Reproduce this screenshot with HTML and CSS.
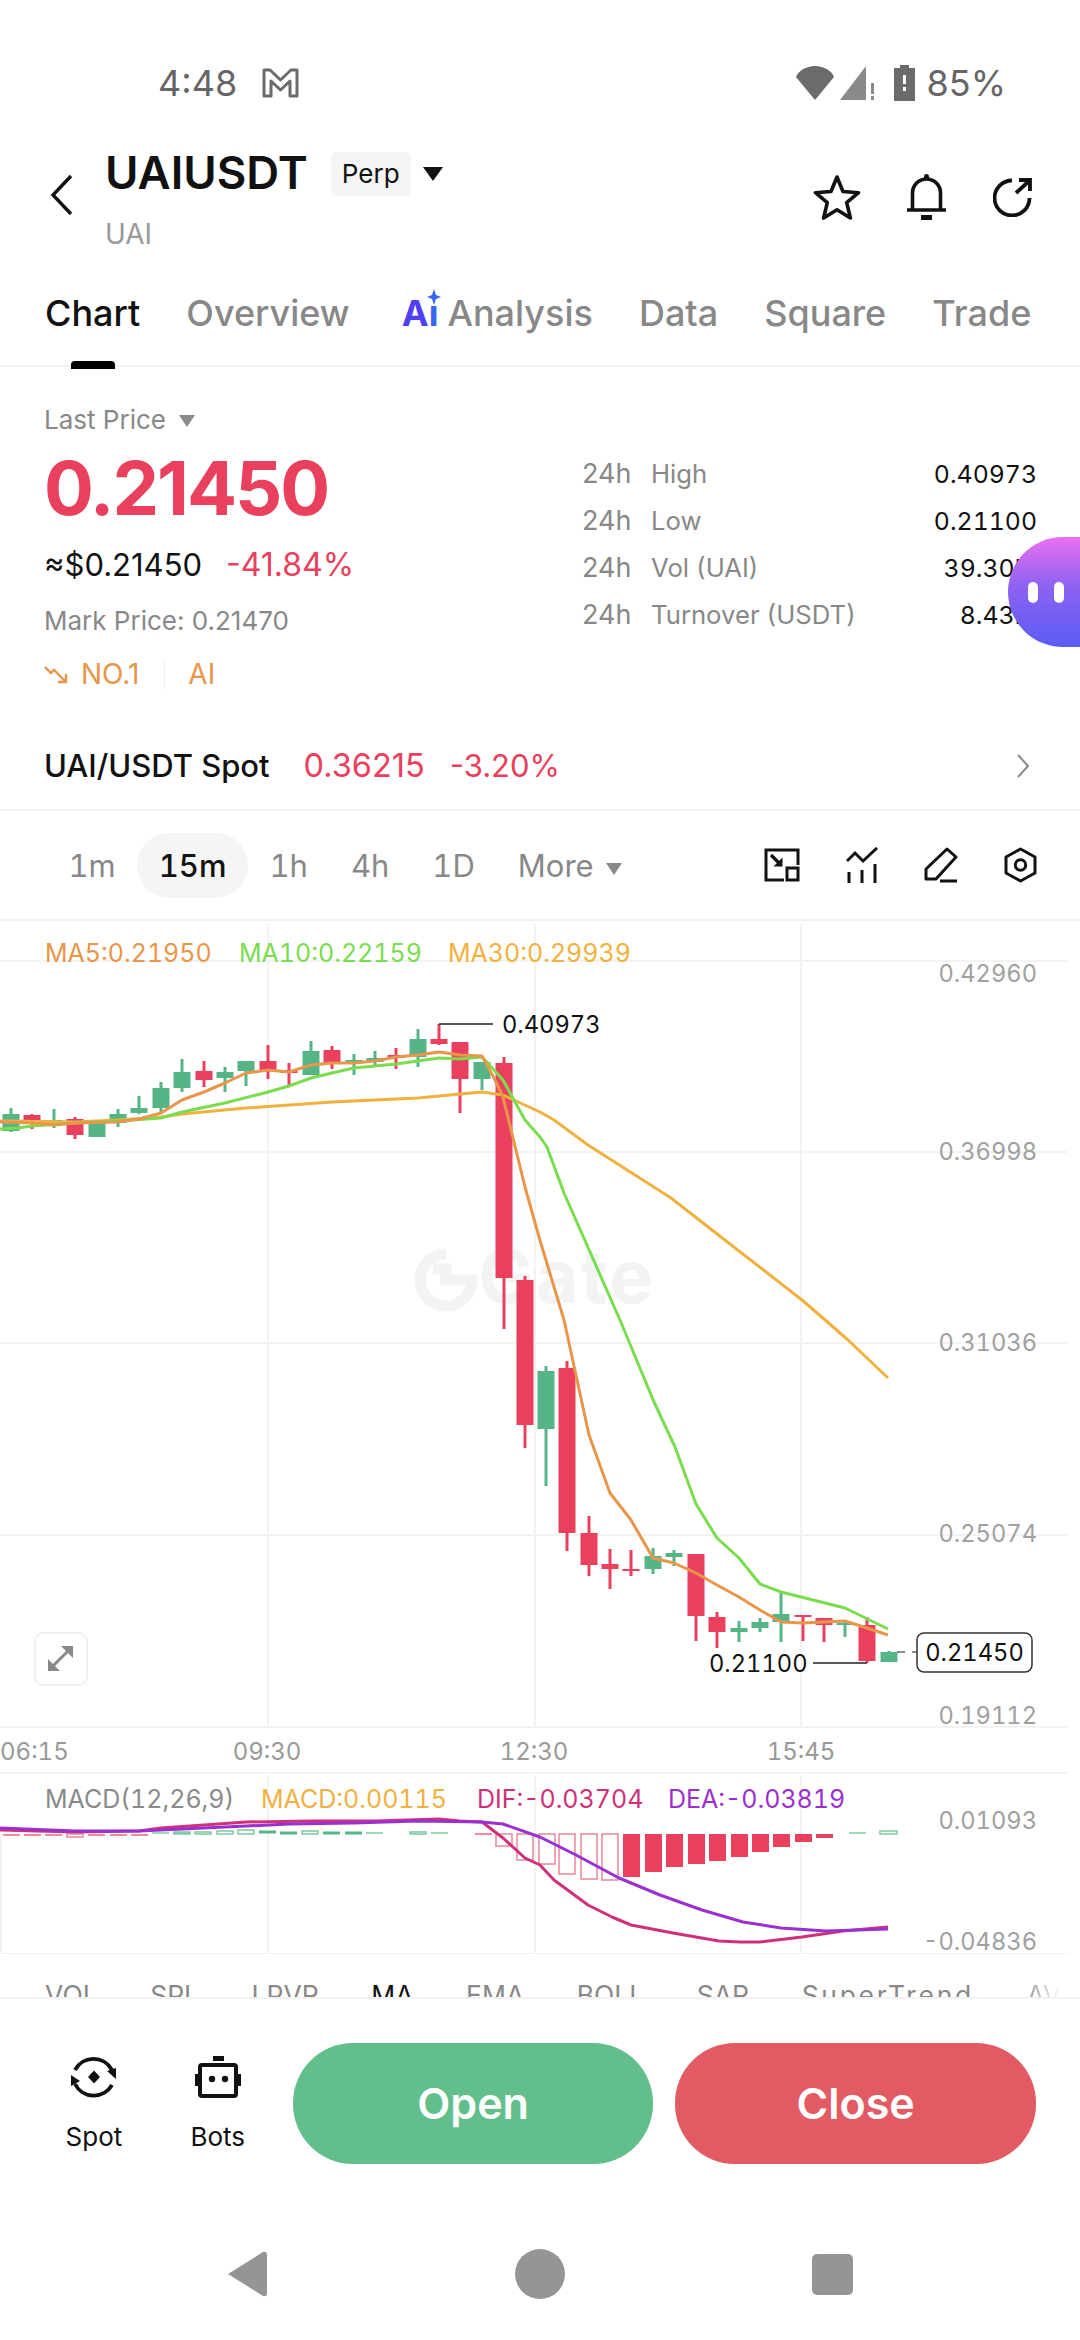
FILE: index.html
```html
<!DOCTYPE html>
<html lang="en">
<head>
  <meta charset="UTF-8" />
  <meta name="viewport" content="width=device-width, initial-scale=1.0"/>
  <title>UAIUSDT Perp</title>
  <link rel="stylesheet" href="styles.css">
</head>
<body>
  <div class="page">
    <!-- Status bar -->
    <div class="status-bar">
      <div class="status-left">
        <span class="status-text">4:48</span>
        <svg class="status-mail" width="37" height="30" viewBox="0 0 37 30"><path d="M2 2h6l10.500 10L29 2h6v26h-7V13l-9.500 9L9 13v15H2z" fill="none" stroke="#6b6b6b" stroke-width="3" stroke-linejoin="round"/></svg>
      </div>
      <div class="status-right">
        <svg width="40" height="36" viewBox="0 0 40 36"><path d="M20 35L1 12C3 6 11 1 20 1s17 5 19 11z" fill="#6b6b6b"/></svg>
        <svg class="status-signal" width="36" height="36" viewBox="0 0 36 36"><path d="M0 35L26 1v34z" fill="#8a8a8a"/><path d="M31 18h3v11h-3zM31 31h3v4h-3z" fill="#8a8a8a"/></svg>
        <svg class="status-battery" width="21" height="36" viewBox="0 0 21 36"><path d="M6 0h9v3h6v33H0V3h6z" fill="#6b6b6b"/><path d="M9 10h3v9H9zM9 22h3v4H9z" fill="#fff"/></svg>
        <span class="status-text">85%</span>
      </div>
    </div>

    <!-- Symbol header -->
    <div class="symbol-header">
      <svg class="back-icon" width="24" height="42" viewBox="0 0 24 42"><path d="M21 2L3 21l18 19" fill="none" stroke="#111" stroke-width="3.400"/></svg>
      <div class="symbol-info">
        <div class="symbol-top">
          <span class="symbol-name">UAIUSDT</span>
          <span class="perp-chip">Perp</span>
          <span class="caret caret-dark"></span>
        </div>
        <div class="symbol-sub">UAI</div>
      </div>
      <div class="header-icons">
        <svg width="48" height="46" viewBox="0 0 48 46"><path d="M24 3l6 14.500 15.500 1.200-11.800 10 3.700 15.300L24 35.800 10.600 44l3.700-15.300L2.500 18.700 18 17.500z" fill="none" stroke="#111" stroke-width="3.600" stroke-linejoin="round"/></svg>
        <svg width="40" height="46" viewBox="0 0 40 46"><circle cx="19.500" cy="2.500" r="2.500" fill="#111"/><path d="M5.500 35V19a14 14 0 0 1 28 0v16M0 36h39" fill="none" stroke="#111" stroke-width="3.600"/><path d="M14 41h11v5H14z" fill="#111"/></svg>
        <svg width="40" height="40" viewBox="0 0 40 40"><path d="M19 3.500A17.500 17.500 0 1 0 36.500 21M23 16L37 3M26 3h11v11" fill="none" stroke="#111" stroke-width="3.800"/></svg>
      </div>
    </div>

    <!-- Tabs -->
    <div class="tabs">
      <span class="tab tab-active">Chart</span>
      <span class="tab">Overview</span>
      <span class="tab tab-ai"><span class="ai-mark">A<span class="ai-i">i<svg class="ai-star" width="14" height="16" viewBox="0 0 14 16"><path d="M7 0l2 6 5 2-5 2-2 6-2-6-5-2 5-2z" fill="#3566f5"/></svg></span></span>Analysis</span>
      <span class="tab">Data</span>
      <span class="tab">Square</span>
      <span class="tab">Trade</span>
    </div>

    <!-- Price summary -->
    <div class="summary">
      <div class="summary-left">
        <div class="last-price">Last Price <span class="caret caret-grey"></span></div>
        <div class="big-price">0.21450</div>
        <div class="fiat-row"><span class="fiat">≈$0.21450</span><span class="down">-41.84%</span></div>
        <div class="mark-price">Mark Price: 0.21470</div>
        <div class="tag-row">
          <svg width="24" height="20" viewBox="0 0 24 20"><path d="M1 3l6 6 3-3 11 11M22 10v8h-8" fill="none" stroke="#e8964a" stroke-width="2.400"/></svg>
          <span class="tag-no">NO.1</span>
          <span class="tag-sep"></span>
          <span>AI</span>
        </div>
      </div>
      <div class="summary-right">
        <div class="stat-row"><span class="stat-key">24h</span><span class="stat-name">High</span><span class="stat-value">0.40973</span></div>
        <div class="stat-row"><span class="stat-key">24h</span><span class="stat-name">Low</span><span class="stat-value">0.21100</span></div>
        <div class="stat-row"><span class="stat-key">24h</span><span class="stat-name">Vol (UAI)</span><span class="stat-value">39.30M</span></div>
        <div class="stat-row"><span class="stat-key">24h</span><span class="stat-name">Turnover (USDT)</span><span class="stat-value">8.43M</span></div>
      </div>
      <div class="assist-bubble"><span></span><span></span></div>
    </div>

    <!-- Spot link -->
    <div class="spot-row">
      <span class="spot-name">UAI/USDT Spot</span>
      <span class="spot-price">0.36215</span>
      <span class="spot-change">-3.20%</span>
      <svg class="spot-arrow" width="14" height="26" viewBox="0 0 14 26"><path d="M2 2l10 11L2 24" fill="none" stroke="#8a8a8a" stroke-width="2"/></svg>
    </div>

    <!-- Timeframes -->
    <div class="timeframes">
      <span class="tf">1m</span>
      <span class="tf tf-active">15m</span>
      <span class="tf">1h</span>
      <span class="tf">4h</span>
      <span class="tf">1D</span>
      <span class="tf tf-more">More <span class="caret caret-grey"></span></span>
      <div class="tf-icons">
        <svg width="36" height="34" viewBox="0 0 36 34"><path d="M20 32H2V2h32v15M23 20h11v12H23z" fill="none" stroke="#111" stroke-width="3"/><path d="M7 7l9 9" stroke="#111" stroke-width="3.200"/><path d="M18.500 9.500v9h-9z" fill="#111"/></svg>
        <svg width="32" height="36" viewBox="0 0 32 36"><path d="M1 14l8-8 8 8L31 1M3 25v11M16 23v13M29 17v19" fill="none" stroke="#111" stroke-width="3"/></svg>
        <svg width="34" height="36" viewBox="0 0 34 36"><path d="M23 2l9 8-20 22H2V22zM16 34h17" fill="none" stroke="#111" stroke-width="3" stroke-linejoin="round"/></svg>
        <svg width="33" height="36" viewBox="0 0 33 36"><path d="M16.500 2l14.500 8v16l-14.500 8L2 26V10z" fill="none" stroke="#111" stroke-width="3" stroke-linejoin="round"/><circle cx="16.500" cy="18" r="5.200" fill="none" stroke="#111" stroke-width="3"/></svg>
      </div>
    </div>

    <!-- Chart -->
    <svg class="chart" width="1080" height="1033" viewBox="0 921 1080 1033">
      <!-- grid -->
      <g class="grid">
        <path d="M0 961H1068M0 1152H1068M0 1343H1068M0 1535H1068M0 1727H1068M0 1773H1068M0 1954H1068"/>
        <path d="M268 924V1727M535 924V1727M801 924V1727M268 1775V1954M535 1775V1954M801 1775V1954M1 1835V1954"/>
      </g>

      <!-- watermark -->
      <g class="watermark">
        <path d="M446 1254a26 26 0 1 0 26 26h-26v-11h-13" fill="none" stroke="#f2f3f3" stroke-width="11"/>
        <text x="478" y="1303">Gate</text>
      </g>

      <text class="legend ma5" x="45" y="962">MA5:0.21950</text>
      <text class="legend ma10" x="239" y="962">MA10:0.22159</text>
      <text class="legend ma30" x="448" y="962">MA30:0.29939</text>

      <g class="axis">
        <text x="1037" y="982">0.42960</text>
        <text x="1037" y="1160">0.36998</text>
        <text x="1037" y="1351">0.31036</text>
        <text x="1037" y="1542">0.25074</text>
        <text x="1037" y="1724">0.19112</text>
        <text x="1037" y="1829">0.01093</text>
        <text x="1037" y="1950">-0.04836</text>
      </g>

      <!-- candles: rising -->
      <path class="wick-up" d="M11 1108V1132M54 1109V1128M97 1120V1137M118 1109V1127M139 1096V1114M161 1082V1113M182 1059V1092M225 1067V1092M246 1062V1086M311 1041V1075M354 1054V1075M375 1051V1065M418 1029V1067M482 1062V1090M546 1366V1486M653 1548V1574M674 1550V1566M739 1621V1642M760 1618V1632M781 1593V1642M845 1620V1637M889 1651V1662"/>
      <g class="body-up">
        <rect x="2.500" y="1114" width="17" height="17"/><rect x="45.500" y="1120" width="17" height="4"/><rect x="88.500" y="1122" width="17" height="15"/><rect x="109.500" y="1114" width="17" height="9"/><rect x="130.500" y="1108" width="17" height="5"/><rect x="152.500" y="1088" width="17" height="20"/><rect x="173.500" y="1072" width="17" height="16"/><rect x="216.500" y="1072" width="17" height="6"/><rect x="237.500" y="1061" width="17" height="10"/><rect x="302.500" y="1051" width="17" height="24"/><rect x="345.500" y="1060" width="17" height="4"/><rect x="366.500" y="1058" width="17" height="4"/><rect x="409.500" y="1039" width="17" height="18"/><rect x="473.500" y="1062" width="17" height="17"/><rect x="537.500" y="1371" width="17" height="58"/><rect x="644.500" y="1556" width="17" height="13"/><rect x="665.500" y="1553" width="17" height="4"/><rect x="730.500" y="1628" width="17" height="4"/><rect x="751.500" y="1622" width="17" height="6"/><rect x="772.500" y="1614" width="17" height="8"/><rect x="836.500" y="1623" width="17" height="2"/><rect x="880.500" y="1652" width="17" height="10"/>
      </g>
      <!-- candles: falling -->
      <path class="wick-down" d="M32 1114V1129M75 1117V1139M204 1061V1087M268 1045V1079M289 1063V1087M332 1046V1069M396 1048V1069M439 1024V1045M460 1042V1113M504 1057V1329M525 1276V1448M567 1361V1551M589 1516V1576M610 1549V1589M631 1550V1576M696 1554V1641M717 1612V1648M803 1615V1641M824 1618V1642M867 1617V1663"/>
      <g class="body-down">
        <rect x="23.500" y="1115" width="17" height="8"/><rect x="66.500" y="1119" width="17" height="16"/><rect x="195.500" y="1071" width="17" height="9"/><rect x="259.500" y="1061" width="17" height="9"/><rect x="280.500" y="1070" width="17" height="3"/><rect x="323.500" y="1050" width="17" height="14"/><rect x="387.500" y="1055" width="17" height="3"/><rect x="430.500" y="1039" width="17" height="5"/><rect x="451.500" y="1042" width="17" height="37"/><rect x="495.500" y="1063" width="17" height="215"/><rect x="516.500" y="1280" width="17" height="145"/><rect x="558.500" y="1368" width="17" height="165"/><rect x="580.500" y="1533" width="17" height="32"/><rect x="601.500" y="1564" width="17" height="5"/><rect x="622.500" y="1569" width="17" height="2"/><rect x="687.500" y="1554" width="17" height="62"/><rect x="708.500" y="1617" width="17" height="15"/><rect x="794.500" y="1615" width="17" height="2"/><rect x="815.500" y="1618" width="17" height="7"/><rect x="858.500" y="1625" width="17" height="36"/>
      </g>

      <!-- moving averages -->
      <polyline class="line line-ma30" points="0,1121 75,1122 118,1120 161,1117 182,1114 246,1108 332,1102 418,1098 460,1094 482,1092 503,1095 516,1101 540,1112 554,1120 588,1145 671,1198 712,1230 802,1300 824,1319 848,1340 888,1378"/>
      <polyline class="line line-ma10" points="0,1129 17,1128 32,1126 75,1123 118,1121 161,1118 182,1112 225,1103 268,1092 289,1086 311,1078 332,1073 354,1068 375,1066 396,1064 418,1061 439,1058 460,1059 482,1057 503,1080 525,1120 540,1137 547,1147 564,1193 620,1320 654,1402 675,1447 696,1504 717,1538 739,1558 760,1584 781,1592 845,1608 888,1629"/>
      <polyline class="line line-ma5" points="0,1122 32,1123 54,1125 75,1123 118,1122 139,1119 161,1113 182,1100 204,1092 225,1083 246,1073 268,1070 289,1072 311,1065 332,1063 354,1063 375,1061 396,1057 418,1055 439,1052 460,1055 482,1056 495,1080 503,1097 525,1187 539,1237 564,1320 589,1435 610,1493 631,1520 653,1558 674,1563 696,1573 717,1585 739,1597 760,1610 781,1622 803,1623 824,1622 845,1621 867,1628 888,1635"/>

      <!-- high / low / last markers -->
      <path class="marker" d="M439 1024H493M813 1663H867"/>
      <text class="marker-text" x="502" y="1033">0.40973</text>
      <text class="marker-text" x="709" y="1672">0.21100</text>
      <path class="marker-dash" d="M897 1652H917"/>
      <rect class="last-box" x="917" y="1633" width="115" height="39" rx="7"/>
      <text class="marker-text" x="974.500" y="1661" text-anchor="middle">0.21450</text>

      <!-- expand button -->
      <rect class="expand-box" x="35" y="1633" width="52" height="52" rx="8"/>
      <path class="expand-head" d="M48 1671v-12l12 12zM73 1646v12l-12-12z"/>
      <path class="expand-shaft" d="M53 1666l15-15"/>

      <!-- time axis -->
      <g class="time-axis">
        <text x="0" y="1760">06:15</text>
        <text x="267" y="1760" text-anchor="middle">09:30</text>
        <text x="534" y="1760" text-anchor="middle">12:30</text>
        <text x="801" y="1760" text-anchor="middle">15:45</text>
      </g>

      <!-- MACD -->
      <text class="legend macd-title" x="45" y="1808">MACD(12,26,9)</text>
      <text class="legend ma30" x="261" y="1808">MACD:0.00115</text>
      <text class="legend dif" x="477" y="1808">DIF:-0.03704</text>
      <text class="legend dea" x="668" y="1808">DEA:-0.03819</text>

      <path class="hist-thin-down" d="M3 1835H20M24 1835H41M45 1835H62M88 1835H105M110 1835H127M131 1835H148M475 1834H492"/>
      <path class="hist-thin-up" d="M152 1833H169M173 1833H190M345 1833H362M366 1833H383M431 1833H448M849 1833H866"/>
      <path class="hist-dark-up" d="M259 1832H276M280 1833H297M323 1833H340M345 1833H362"/>
      <g class="hist-hollow-up">
        <rect x="174" y="1832" width="16" height="2"/><rect x="195" y="1832" width="16" height="2"/><rect x="217" y="1831" width="16" height="3"/><rect x="238" y="1830" width="16" height="4"/><rect x="302" y="1831" width="16" height="3"/><rect x="410" y="1832" width="16" height="2"/><rect x="880" y="1831" width="17" height="3"/>
      </g>
      <g class="hist-hollow-down">
        <rect x="67" y="1834" width="16" height="3"/><rect x="496" y="1834" width="16" height="12"/><rect x="517" y="1834" width="16" height="26"/><rect x="539" y="1834" width="16" height="30"/><rect x="559" y="1834" width="16" height="40"/><rect x="581" y="1834" width="16" height="45"/><rect x="602" y="1834" width="16" height="46"/>
      </g>
      <g class="hist-solid">
        <rect x="623" y="1834" width="17" height="43"/><rect x="645" y="1834" width="17" height="38"/><rect x="666" y="1834" width="17" height="33"/><rect x="688" y="1834" width="17" height="30"/><rect x="709" y="1834" width="17" height="27"/><rect x="731" y="1834" width="17" height="23"/><rect x="752" y="1834" width="17" height="18"/><rect x="773" y="1834" width="17" height="13"/><rect x="795" y="1834" width="17" height="8"/><rect x="816" y="1834" width="17" height="4"/>
      </g>
      <polyline class="line line-dif" points="0,1830 75,1832 139,1831 161,1828 204,1825 246,1822 311,1821 375,1821 439,1819 460,1821 482,1822 503,1838 525,1858 540,1865 554,1880 588,1905 612,1917 631,1925 673,1933 719,1941 740,1942 760,1942 802,1937 843,1931 888,1927"/>
      <polyline class="line line-dea" points="0,1828 75,1831 139,1831 161,1830 225,1827 289,1824 354,1823 418,1821 482,1822 503,1824 540,1837 576,1855 619,1878 660,1895 702,1910 743,1922 781,1928 826,1931 888,1929"/>
    </svg>

    <!-- Indicator tabs, cut off by the bottom bar -->
    <div class="indicators">
      <span>VOL</span><span>SPL</span><span>LPVR</span><span class="ind-active">MA</span><span>EMA</span><span>BOLL</span><span>SAR</span><span class="ind-wide">SuperTrend</span><span class="ind-fade">AVL</span>
    </div>

    <!-- Bottom actions -->
    <div class="actions">
      <div class="action-link">
        <svg width="48" height="48" viewBox="0 0 48 48"><path d="M5 17A21 21 0 0 1 42 17M42 32A21 21 0 0 1 5 31" fill="none" stroke="#111" stroke-width="3.800"/><path d="M37 18l9-3v11zM1 22v11l9-5z" fill="#111"/><path d="M24 17.500l6 6.500-6 6.500-6-6.500z" fill="#111"/></svg>
        <span>Spot</span>
      </div>
      <div class="action-link">
        <svg width="48" height="48" viewBox="0 0 48 48"><rect x="6" y="12" width="36" height="31" rx="2" fill="none" stroke="#111" stroke-width="4"/><path d="M19 3h11v5H19zM1 21h3v12H1zM44 21h3v12h-3z" fill="#111"/><circle cx="18" cy="26" r="3.200" fill="#111"/><circle cx="31" cy="26" r="3.200" fill="#111"/></svg>
        <span>Bots</span>
      </div>
      <div class="trade-btn btn-open">Open</div>
      <div class="trade-btn btn-close">Close</div>
    </div>

    <!-- Android nav -->
    <div class="nav-bar">
      <svg width="42" height="46" viewBox="0 0 42 46"><path d="M2 23L37 1q4-1 4 3v38q0 4-4 3z" fill="#959595"/></svg>
      <span class="nav-home"></span>
      <span class="nav-recent"></span>
    </div>
  </div>
</body>
</html>
```

FILE: styles.css
```css
* {
  box-sizing: border-box;
}
body {
  margin: 0;
  background: #fff;
  font-family: Inter, 'Liberation Sans', sans-serif;
  color: #111;
}
.page {
  width: 1080px;
  height: 2340px;
  overflow: hidden;
  display: flex;
  flex-direction: column;
}

/* Status bar */
.status-bar {
  height: 115px;
  padding: 64px 74px 0 158px;
  display: flex;
  justify-content: space-between;
  align-items: flex-start;
}
.status-left, .status-right {
  display: flex;
  align-items: center;
  height: 38px;
}
.status-text {
  font-size: 36px;
  color: #666;
}
.status-mail {
  margin-left: 25px;
}
.status-signal {
  margin: 0 0 0 5px;
}
.status-battery {
  margin: 0 11px 0 18px;
}

/* Header */
.symbol-header {
  height: 136px;
  padding: 32px 47px 0 50px;
  display: flex;
  align-items: flex-start;
}
.back-icon {
  margin: 27px 31px 0 0;
}
.symbol-info {
  flex: 1;
}
.symbol-top {
  display: flex;
  align-items: center;
  height: 50px;
}
.symbol-name {
  font-size: 45.500px;
  font-weight: 600;
}
.perp-chip {
  margin: 4px 0 0 23px;
  padding: 0 11px;
  height: 44px;
  line-height: 44px;
  background: #f5f5f5;
  border-radius: 6px;
  font-size: 26px;
}
.symbol-sub {
  margin-top: 20px;
  font-size: 28px;
  color: #999;
}
.caret {
  display: inline-block;
  border-style: solid;
  border-width: 14px 10px 0;
  border-color: #111 transparent transparent;
}
.caret-dark {
  margin: 3px 0 0 12px;
}
.caret-grey {
  border-width: 12px 8px 0;
  border-top-color: #8a8a8a;
  vertical-align: 2px;
  margin-left: 6px;
}
.header-icons {
  display: flex;
  align-items: center;
  gap: 46px;
  margin-top: 27px;
}

/* Tabs */
.tabs {
  position: relative;
  height: 116px;
  padding: 0 0 0 45px;
  display: flex;
  gap: 46px;
  border-bottom: 2px solid #f2f2f2;
}
.tab {
  font-size: 36px;
  font-weight: 500;
  line-height: 44px;
  margin-top: 40px;
  color: #888;
  white-space: nowrap;
}
.tab-active {
  color: #111;
  position: relative;
}
.tab-active::after {
  content: "";
  position: absolute;
  left: 26px;
  top: 70px;
  width: 44px;
  height: 8px;
  border-radius: 4px 4px 0 0;
  background: #000;
}
.tab-ai {
  margin-left: 6px;
}
.ai-mark {
  color: #4f3ff0;
  font-weight: 700;
  margin-right: 9px;
}
.ai-i {
  position: relative;
  color: #3566f5;
}
.ai-star {
  position: absolute;
  left: -2px;
  top: -2px;
  background: #fff;
}

/* Price summary */
.summary {
  position: relative;
  height: 355px;
  padding: 0 43px 0 44px;
  display: flex;
  justify-content: space-between;
}
.last-price {
  margin-top: 37px;
  font-size: 26px;
  line-height: 32px;
  color: #888;
}
.big-price {
  margin-top: 7px;
  font-size: 74px;
  line-height: 90px;
  font-weight: 700;
  letter-spacing: -2px;
  color: #e9405d;
}
.fiat-row {
  display: flex;
  align-items: center;
  gap: 24px;
  margin-top: 13px;
  font-size: 31px;
  line-height: 38px;
}
.down {
  font-size: 32px;
  color: #e9405d;
}
.mark-price {
  margin-top: 20px;
  font-size: 26px;
  line-height: 34px;
  color: #888;
}
.tag-row {
  display: flex;
  align-items: center;
  margin-top: 19px;
  font-size: 28px;
  line-height: 34px;
  color: #e8964a;
}
.tag-no {
  margin-left: 13px;
}
.tag-sep {
  width: 1px;
  height: 30px;
  margin: 0 23px 0 25px;
  background: #f0f0f0;
}
.summary-right {
  width: 455px;
  padding-top: 90px;
  display: flex;
  flex-direction: column;
  gap: 13px;
}
.stat-row {
  display: flex;
  font-size: 25.700px;
  line-height: 34px;
}
.stat-key {
  width: 69px;
  font-size: 27px;
  color: #888;
}
.stat-name {
  flex: 1;
  color: #888;
}
.stat-value {
  font-size: 24.800px;
  color: #111;
  font-variant-numeric: tabular-nums;
}
.assist-bubble {
  position: absolute;
  right: 0;
  top: 170px;
  width: 72px;
  height: 110px;
  border-radius: 55px 0 0 55px;
  background: linear-gradient(180deg, #e970ef 0%, #8d62f2 45%, #5b5cf5 100%);
  display: flex;
  align-items: center;
  justify-content: flex-start;
  gap: 16px;
  padding-left: 20px;
}
.assist-bubble span {
  width: 10px;
  height: 21px;
  border-radius: 5px;
  background: #fff;
}

/* Spot row */
.spot-row {
  height: 89px;
  padding: 0 50px 0 44px;
  display: flex;
  align-items: center;
  border-bottom: 2px solid #f2f2f2;
  font-size: 31px;
}
.spot-name {
  font-weight: 500;
}
.spot-price {
  margin-left: 34px;
  font-size: 32.500px;
  color: #e9405d;
}
.spot-change {
  margin-left: 25px;
  color: #e9405d;
}
.spot-arrow {
  margin-left: auto;
}

/* Timeframes */
.timeframes {
  height: 110px;
  padding: 0 43px 0 47px;
  display: flex;
  align-items: center;
  border-bottom: 2px solid #f2f2f2;
  font-variant-numeric: tabular-nums;
}
.tf {
  font-size: 31px;
  color: #888;
  padding: 0 21.500px;
  height: 65px;
  line-height: 65px;
  white-space: nowrap;
}
.tf-active {
  color: #111;
  font-weight: 500;
  background: #f5f5f5;
  border-radius: 33px;
}
.tf-more .caret-grey {
  margin-left: 4px;
}
.tf-icons {
  margin-left: auto;
  display: flex;
  align-items: center;
  gap: 46px;
}

/* Chart */
.chart {
  display: block;
  flex: none;
  font-variant-numeric: tabular-nums;
}
.grid path {
  fill: none;
  stroke: #f3f3f4;
  stroke-width: 2;
}
.watermark text {
  font-size: 74px;
  font-weight: 700;
  letter-spacing: 2px;
  fill: #f2f3f3;
}
.legend {
  font-size: 25px;
}
.ma5 {
  fill: #e8964a;
}
.ma10 {
  fill: #7adc4f;
}
.ma30 {
  fill: #f0b13f;
}
.macd-title {
  fill: #8a8a8a;
}
.dif {
  fill: #d0307a;
}
.dea {
  fill: #9b30d0;
}
.axis text {
  font-size: 23.700px;
  fill: #a0a0a0;
  text-anchor: end;
}
.time-axis text {
  font-size: 24px;
  fill: #999;
}
.wick-up, .wick-down {
  fill: none;
  stroke-width: 3;
}
.wick-up {
  stroke: #56b586;
}
.wick-down {
  stroke: #e9405d;
}
.body-up {
  fill: #56b586;
}
.body-down {
  fill: #e9405d;
}
.line {
  fill: none;
  stroke-width: 3;
  stroke-linejoin: round;
}
.line-ma5 {
  stroke: #e8964a;
}
.line-ma10 {
  stroke: #7adc4f;
}
.line-ma30 {
  stroke: #f0b13f;
}
.line-dif {
  stroke: #d0307a;
}
.line-dea {
  stroke: #9b30d0;
}
.marker {
  fill: none;
  stroke: #222;
  stroke-width: 1.500;
}
.marker-dash {
  fill: none;
  stroke: #666;
  stroke-width: 1.500;
  stroke-dasharray: 8 7;
}
.marker-text {
  font-size: 23.700px;
  fill: #111;
}
.last-box {
  fill: #fff;
  stroke: #333;
  stroke-width: 1.500;
}
.expand-box {
  fill: #fff;
  stroke: #f0f0f0;
  stroke-width: 2;
}
.expand-head {
  fill: #888;
}
.expand-shaft {
  fill: none;
  stroke: #888;
  stroke-width: 3;
}
.hist-thin-down, .hist-thin-up, .hist-dark-up {
  fill: none;
  stroke-width: 2;
}
.hist-thin-down {
  stroke: #f08a9c;
}
.hist-thin-up {
  stroke: #a0d8bb;
}
.hist-dark-up {
  stroke: #56b586;
  stroke-width: 3;
}
.hist-hollow-up {
  fill: none;
  stroke: #7cc7a1;
  stroke-width: 1.500;
}
.hist-hollow-down {
  fill: none;
  stroke: #e8869a;
  stroke-width: 1.500;
}
.hist-solid {
  fill: #e9405d;
}

/* Indicators */
.indicators {
  height: 45px;
  padding: 24px 0 0 45px;
  display: flex;
  gap: 52.500px;
  overflow: hidden;
  border-bottom: 2px solid #f2f2f2;
  font-size: 26.500px;
  line-height: 34px;
  color: #888;
  white-space: nowrap;
}
.ind-active {
  color: #111;
}
.ind-wide {
  letter-spacing: 2.700px;
}
.ind-fade {
  background: linear-gradient(90deg, #999, #fff 70%);
  -webkit-background-clip: text;
  background-clip: text;
  color: transparent;
}

/* Bottom actions */
.actions {
  height: 211px;
  padding: 44px 44px 0 0;
  display: flex;
  align-items: flex-start;
}
.action-link {
  display: flex;
  flex-direction: column;
  align-items: center;
  width: 124px;
  margin-top: 10px;
  font-size: 26px;
  gap: 20px;
}
.action-link:first-child {
  margin-left: 32px;
}
.trade-btn {
  width: 361px;
  height: 121px;
  border-radius: 60px;
  color: #fff;
  font-size: 43px;
  font-weight: 600;
  line-height: 121px;
  text-align: center;
}
.btn-open {
  margin-left: 13px;
  background: #62bf8c;
}
.btn-close {
  margin-left: 22px;
  background: #e15a64;
}

/* Android nav */
.nav-bar {
  height: 128px;
  display: flex;
  align-items: center;
  padding: 0 227px 0 226px;
  justify-content: space-between;
}
.nav-home {
  width: 50px;
  height: 50px;
  border-radius: 50%;
  background: #959595;
}
.nav-recent {
  width: 41px;
  height: 41px;
  border-radius: 5px;
  background: #959595;
}
```
